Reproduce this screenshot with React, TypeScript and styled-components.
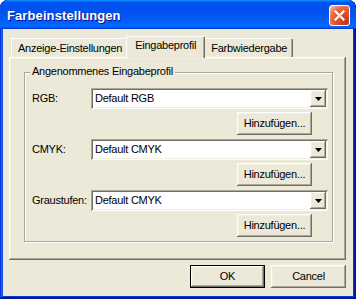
import React from "react";
import styled, { createGlobalStyle, css } from "styled-components";

const Global = createGlobalStyle`
  html, body { margin: 0; padding: 0; background: #fff; }
  body { font-family: "Liberation Sans", Arial, sans-serif; font-size: 11px; }
`;

const raised = css`
  box-shadow: inset -1px -1px #716f64, inset 1px 1px #ffffff,
    inset -2px -2px #aca899, inset 2px 2px #f1efe2;
`;

const Window = styled.div`
  width: 356px;
  height: 299px;
  display: flex;
  flex-direction: column;
  background: #0054e3;
  border-radius: 8px 8px 0 0;
  box-shadow: inset -1px -1px #00138c, inset 1px 1px #0831d9,
    inset -2px -2px #001ea0, inset 2px 2px #166aee, inset -3px -3px #003bda,
    inset 3px 3px #0855dd;
  overflow: hidden;
`;

const TitleBar = styled.div`
  height: 29px;
  flex: none;
  display: flex;
  align-items: center;
  justify-content: space-between;
  padding: 0 6px 0 7px;
  border-radius: 8px 8px 0 0;
  background: linear-gradient(
    180deg,
    #0997ff,
    #0053ee 8%,
    #0050ee 40%,
    #0066ff 88%,
    #0066ff 93%,
    #005bff 95%,
    #003dd7 96%,
    #003dd7
  );
`;

const Title = styled.span`
  color: #fff;
  font-family: "Liberation Sans", Arial, sans-serif;
  font-weight: bold;
  font-size: 13px;
  letter-spacing: 0.1px;
  text-shadow: 1px 1px #0f1089;
  margin-top: 2px;
`;

const CloseButton = styled.div`
  width: 21px;
  height: 21px;
  box-sizing: border-box;
  border: 1px solid #fff;
  border-radius: 3px;
  display: flex;
  align-items: center;
  justify-content: center;
  margin-top: 2px;
  background: radial-gradient(
    circle at 85% 85%,
    #c0391a 0%,
    #e0532c 45%,
    #e8704c 70%,
    #f7b39c 92%,
    #fde0d4 100%
  );
`;

const Body = styled.div`
  flex: 1;
  margin: 0 3px 3px;
  background: #ece9d8;
  display: flex;
  flex-direction: column;
  padding: 7px 7px 0 6px;
`;

const TabStrip = styled.div`
  height: 21px;
  display: flex;
  align-items: flex-end;
  padding-left: 2px;
`;

const Tab = styled.div<{ $active?: boolean }>`
  box-sizing: border-box;
  height: 19px;
  padding: 3px 5px 0 6px;
  line-height: 13px;
  letter-spacing: -0.25px;
  color: #000;
  white-space: nowrap;
  background: #ece9d8;
  border-left: 1px solid #fff;
  border-top: 1px solid #fff;
  border-right: 1px solid #716f64;
  border-radius: 2px 2px 0 0;
  box-shadow: inset -1px 0 #aca899;
  ${(p) =>
    p.$active &&
    css`
      height: 22px;
      padding: 2px 8px 0 8px;
      margin: 0 -1px -1px -2px;
      position: relative;
      z-index: 1;
    `}
`;

const Panel = styled.div`
  height: 203px;
  box-sizing: border-box;
  padding: 15px 13px 0 15px;
  box-shadow: inset -1px -1px #716f64, inset 1px 1px #ffffff,
    inset -2px -2px #aca899, inset 2px 2px #f1efe2;
`;

const GroupBox = styled.div`
  position: relative;
  border: 1px solid #aca899;
  box-shadow: 1px 1px 0 #fff, inset 1px 1px 0 #fff;
  padding: 15px 4px 4px 7px;
  display: flex;
  flex-direction: column;
  gap: 4px;
`;

const GroupLabel = styled.span`
  position: absolute;
  top: -8px;
  left: 5px;
  padding: 0 2px;
  background: #ece9d8;
  line-height: 13px;
  letter-spacing: -0.25px;
`;

const FieldBlock = styled.div`
  display: flex;
  flex-direction: column;
  gap: 3px;
`;

const ComboRow = styled.div`
  display: flex;
  align-items: center;
`;

const FieldLabel = styled.span`
  width: 59px;
  flex: none;
  line-height: 13px;
  letter-spacing: -0.25px;
`;

const Combo = styled.div`
  flex: 1;
  height: 21px;
  box-sizing: border-box;
  padding: 2px;
  display: flex;
  align-items: center;
  background: #fff;
  box-shadow: inset 1px 1px #aca899, inset -1px -1px #ffffff,
    inset 2px 2px #716f64, inset -2px -2px #f1efe2;
`;

const ComboText = styled.span`
  flex: 1;
  padding-left: 2px;
  line-height: 13px;
  letter-spacing: -0.25px;
`;

const DropButton = styled.div`
  width: 16px;
  height: 17px;
  flex: none;
  display: flex;
  align-items: center;
  justify-content: center;
  background: #ece9d8;
  ${raised}
`;

const ButtonRow = styled.div`
  display: flex;
  justify-content: flex-end;
  padding-right: 16px;
`;

const Button = styled.div<{ $default?: boolean }>`
  width: 75px;
  height: 23px;
  box-sizing: border-box;
  display: flex;
  align-items: center;
  justify-content: center;
  line-height: 13px;
  letter-spacing: -0.25px;
  background: #ece9d8;
  ${raised}
  ${(p) =>
    p.$default &&
    css`
      border: 1px solid #000;
    `}
`;

const Footer = styled.div`
  display: flex;
  justify-content: flex-end;
  gap: 6px;
  margin-top: 5px;
`;

const Arrow = () => (
  <svg width="7" height="4" viewBox="0 0 7 4">
    <path d="M0 0h7L3.5 4z" fill="#000" />
  </svg>
);

const CloseX = () => (
  <svg width="11" height="11" viewBox="0 0 11 11">
    <path
      d="M1.5 1.5L9.5 9.5M9.5 1.5L1.5 9.5"
      stroke="#fff"
      strokeWidth="2.2"
      strokeLinecap="square"
    />
  </svg>
);

const fields = [
  { label: "RGB:", value: "Default RGB" },
  { label: "CMYK:", value: "Default CMYK" },
  { label: "Graustufen:", value: "Default CMYK" },
];

export default function App() {
  return (
    <>
      <Global />
      <Window>
        <TitleBar>
          <Title>Farbeinstellungen</Title>
          <CloseButton>
            <CloseX />
          </CloseButton>
        </TitleBar>
        <Body>
          <TabStrip>
            <Tab>Anzeige-Einstellungen</Tab>
            <Tab $active>Eingabeprofil</Tab>
            <Tab>Farbwiedergabe</Tab>
          </TabStrip>
          <Panel>
            <GroupBox>
              <GroupLabel>Angenommenes Eingabeprofil</GroupLabel>
              {fields.map((f) => (
                <FieldBlock key={f.label}>
                  <ComboRow>
                    <FieldLabel>{f.label}</FieldLabel>
                    <Combo>
                      <ComboText>{f.value}</ComboText>
                      <DropButton>
                        <Arrow />
                      </DropButton>
                    </Combo>
                  </ComboRow>
                  <ButtonRow>
                    <Button>Hinzufügen...</Button>
                  </ButtonRow>
                </FieldBlock>
              ))}
            </GroupBox>
          </Panel>
          <Footer>
            <Button $default>OK</Button>
            <Button>Cancel</Button>
          </Footer>
        </Body>
      </Window>
    </>
  );
}
